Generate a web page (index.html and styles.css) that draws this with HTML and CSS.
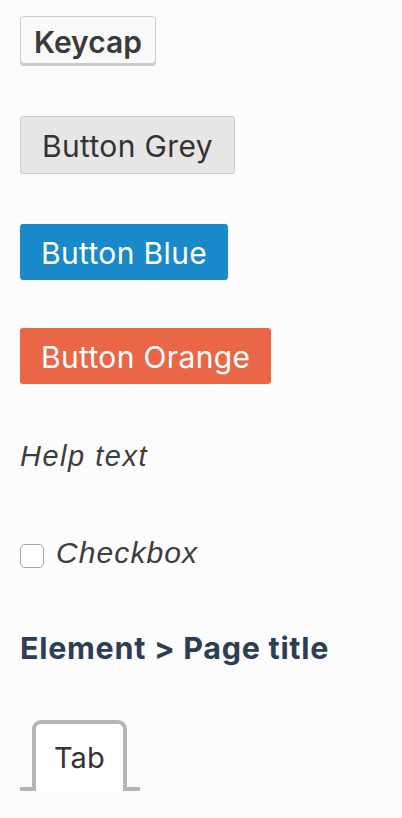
FILE: index.html
```html
<!DOCTYPE html>
<html lang="en">
<head>
<meta charset="utf-8">
<title>UI elements</title>
<link rel="stylesheet" href="styles.css">
</head>
<body>
<main class="page">
  <div class="item item-keycap"><kbd class="keycap">Keycap</kbd></div>
  <div class="item item-grey"><button class="btn btn-grey" type="button">Button Grey</button></div>
  <div class="item item-blue"><button class="btn btn-blue" type="button">Button Blue</button></div>
  <div class="item item-orange"><button class="btn btn-orange" type="button">Button Orange</button></div>
  <p class="help">Help text</p>
  <label class="check"><input class="check-box" type="checkbox"><span class="check-label">Checkbox</span></label>
  <h1 class="title">Element &gt; Page title</h1>
  <div class="tabs"><span class="tab">Tab</span></div>
</main>
</body>
</html>
```
FILE: styles.css
```css
html, body {
  margin: 0;
  padding: 0;
  background: #fcfcfc;
}

.page {
  display: flex;
  flex-direction: column;
  align-items: flex-start;
  padding: 16px 20px 0 20px;
  font-family: Inter, "Noto Sans", sans-serif;
  color: #333;
}

.item { display: flex; }

.keycap {
  display: inline-block;
  font-family: Inter, sans-serif;
  font-weight: 600;
  font-size: 30px;
  line-height: 36px;
  color: #3a3a3a;
  background: #f9f9f9;
  border: 1px solid #cccccc;
  border-radius: 4px;
  box-shadow: 0 2px 0 #c9c9c9;
  padding: 7px 13px 3px 13px;
}

.item-grey { margin-top: 52px; }
.item-blue { margin-top: 50px; }
.item-orange { margin-top: 48px; }

.btn {
  font-family: Inter, sans-serif;
  font-size: 30px;
  letter-spacing: 0.35px;
  line-height: 36px;
  border: 0;
  border-radius: 3px;
  padding: 11px 21px 9px 21px;
  margin: 0;
  cursor: pointer;
}

.btn-grey {
  background: #e6e6e6;
  border: 1px solid #cccccc;
  color: #333;
}

.btn-blue {
  background: #1a89c9;
  color: #fff;
}

.btn-orange {
  background: #e96646;
  color: #fff;
}

.help {
  margin: 56px 0 0 0;
  font-family: "Liberation Sans", Arial, sans-serif;
  font-style: italic;
  font-size: 29px;
  letter-spacing: 1.5px;
  line-height: 32px;
  color: #3d3d3d;
}

.check {
  margin-top: 63px;
  display: flex;
  align-items: center;
  gap: 12px;
}

.check-box {
  appearance: none;
  -webkit-appearance: none;
  margin: 6px 0 0 0;
  width: 24px;
  height: 24px;
  border: 1.5px solid #a3a3a3;
  border-radius: 5px;
  background: #fff;
  box-sizing: border-box;
}

.check-label {
  font-family: "Liberation Sans", Arial, sans-serif;
  font-style: italic;
  font-size: 30px;
  letter-spacing: 1.1px;
  line-height: 36px;
  color: #3d3d3d;
}

.title {
  margin: 59px 0 0 0;
  font-family: Inter, sans-serif;
  font-weight: 700;
  font-size: 30.5px;
  letter-spacing: 0.7px;
  line-height: 36px;
  color: #2c3e54;
}

.tabs {
  margin-top: 54px;
  width: 120px;
  box-sizing: border-box;
  padding-left: 12px;
  border-bottom: 4px solid #b5b5b5;
  display: flex;
}

.tab {
  display: block;
  margin-bottom: -4px;
  background: #fff;
  border: 4px solid #b5b5b5;
  border-bottom: 0;
  border-radius: 9px 9px 0 0;
  padding: 17px 18px 16px 18px;
  font-family: Inter, sans-serif;
  font-size: 29px;
  line-height: 34px;
  color: #333;
}
```
